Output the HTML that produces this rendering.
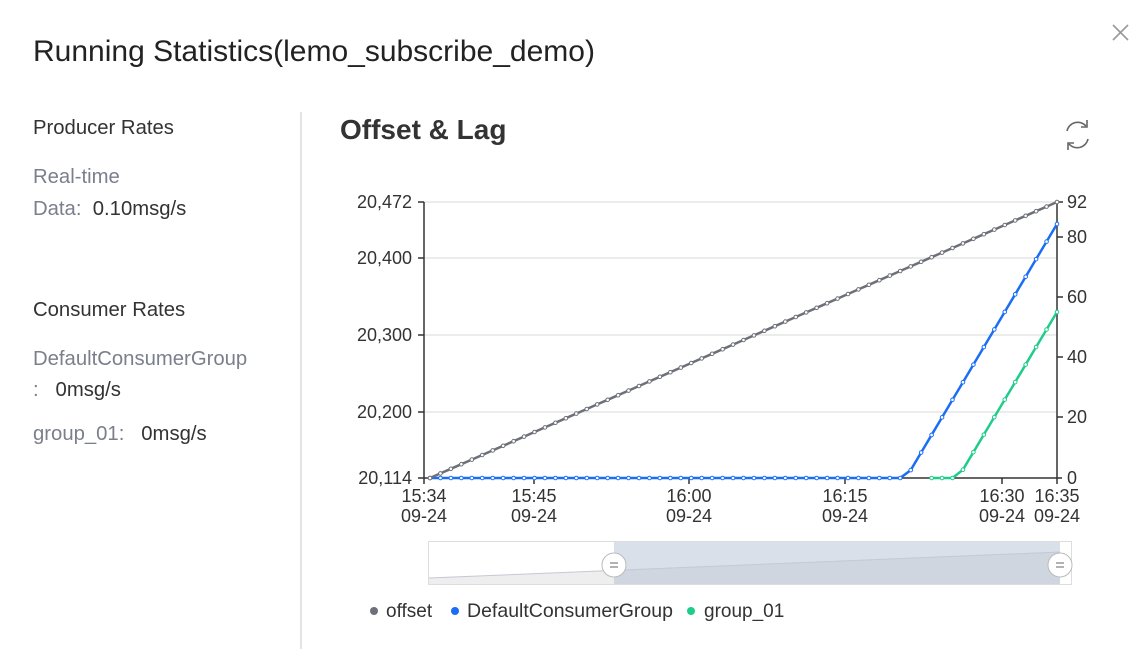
<!DOCTYPE html>
<html><head><meta charset="utf-8"><style>
body{margin:0;width:1141px;height:649px;background:#fff;font-family:"Liberation Sans",sans-serif;overflow:hidden;position:relative;color:#333}
.a{position:absolute;white-space:nowrap}
.g{color:#7b7f8c}
.t{font-size:20.3px}
</style></head><body>
<div class="a" style="left:33px;top:35px;font-size:30px;color:#222">Running Statistics(lemo_subscribe_demo)</div>
<div class="a t" style="left:33px;top:117px">Producer Rates</div>
<div class="a g t" style="left:33px;top:166px">Real-time</div>
<div class="a t" style="left:33px;top:198px"><span class="g">Data:</span>&nbsp; 0.10msg/s</div>
<div class="a t" style="left:33px;top:299px">Consumer Rates</div>
<div class="a g t" style="left:33px;top:348px">DefaultConsumerGroup</div>
<div class="a t" style="left:33px;top:379px"><span class="g">:</span>&nbsp;&nbsp; 0msg/s</div>
<div class="a t" style="left:33px;top:423px"><span class="g">group_01:</span>&nbsp;&nbsp; 0msg/s</div>
<div class="a" style="left:300px;top:112px;width:2px;height:537px;background:#e3e3e3"></div>
<div class="a" style="left:340px;top:114px;font-size:28px;font-weight:bold;color:#333">Offset &amp; Lag</div>
<svg class="a" style="left:0;top:0" width="1141" height="649" id="s">
<g stroke="#999" stroke-width="1.6"><line x1="1113" y1="25" x2="1128" y2="40"/><line x1="1128" y1="25" x2="1113" y2="40"/></g>
<g fill="none" stroke="#666" stroke-width="1.6"><path d="M1067 131a11 11 0 0 1 19-5M1088 139a11 11 0 0 1-19 5"/><path d="M1087 120v7h-6M1068 150v-7h6"/></g>
<g stroke="#e6e6e6" stroke-width="1.5"><line x1="424" x2="1057" y1="202" y2="202"/><line x1="424" x2="1057" y1="258" y2="258"/><line x1="424" x2="1057" y1="335" y2="335"/><line x1="424" x2="1057" y1="412" y2="412"/></g>
<g stroke="#333" stroke-width="1.5"><line x1="424" x2="424" y1="202" y2="478"/><line x1="1057" x2="1057" y1="202" y2="478"/><line x1="418" x2="1062" y1="478" y2="478"/>
<line x1="418" x2="424" y1="202" y2="202"/><line x1="418" x2="424" y1="258" y2="258"/><line x1="418" x2="424" y1="335" y2="335"/><line x1="418" x2="424" y1="412" y2="412"/>
<line x1="1057" x2="1063" y1="202" y2="202"/><line x1="1057" x2="1063" y1="237" y2="237"/><line x1="1057" x2="1063" y1="297" y2="297"/><line x1="1057" x2="1063" y1="357" y2="357"/><line x1="1057" x2="1063" y1="417" y2="417"/>
<line x1="424" x2="424" y1="478" y2="484"/><line x1="534" x2="534" y1="478" y2="484"/><line x1="689" x2="689" y1="478" y2="484"/><line x1="845" x2="845" y1="478" y2="484"/><line x1="1002" x2="1002" y1="478" y2="484"/><line x1="1057" x2="1057" y1="478" y2="484"/></g>
<g font-size="18" fill="#333" text-anchor="end"><text x="412" y="208">20,472</text><text x="412" y="264">20,400</text><text x="412" y="341">20,300</text><text x="412" y="418">20,200</text><text x="412" y="484">20,114</text></g>
<g font-size="18" fill="#333"><text x="1067" y="208">92</text><text x="1067" y="243">80</text><text x="1067" y="303">60</text><text x="1067" y="363">40</text><text x="1067" y="423">20</text><text x="1067" y="484">0</text></g>
<g font-size="18" fill="#333" text-anchor="middle"><text x="424" y="502">15:34</text><text x="424" y="522">09-24</text><text x="534" y="502">15:45</text><text x="534" y="522">09-24</text><text x="689" y="502">16:00</text><text x="689" y="522">09-24</text><text x="845" y="502">16:15</text><text x="845" y="522">09-24</text><text x="1002" y="502">16:30</text><text x="1002" y="522">09-24</text><text x="1057" y="502">16:35</text><text x="1057" y="522">09-24</text></g>
<g id="lines"></g>
<rect x="428.5" y="541.5" width="643" height="43" fill="#fff" stroke="#ddd"/>
<path d="M429 578L614 570V584H429Z" fill="#eee"/>
<rect x="614" y="542" width="446" height="42" fill="#d9e0ea"/>
<path d="M614 570L1060 552V584H614Z" fill="#cfd6e0"/>
<path d="M429 578L1060 552" stroke="#c4c9d2" fill="none"/>
<g fill="#fff" stroke="#bbb"><circle cx="614" cy="565" r="12"/><circle cx="1060" cy="565" r="12"/></g>
<g stroke="#999" stroke-width="1.5"><line x1="610" x2="618" y1="563" y2="563"/><line x1="610" x2="618" y1="567" y2="567"/><line x1="1056" x2="1064" y1="563" y2="563"/><line x1="1056" x2="1064" y1="567" y2="567"/></g>
<circle cx="374" cy="611" r="4" fill="#6e7079"/><text x="386" y="617" font-size="19" fill="#333">offset</text>
<circle cx="455" cy="611" r="4" fill="#1a6ef5"/><text x="467" y="617" font-size="19.5" fill="#333">DefaultConsumerGroup</text>
<circle cx="691" cy="611" r="4" fill="#1fcc8a"/><text x="704" y="617" font-size="19" fill="#333">group_01</text>
</svg>
<script>
var g=document.getElementById('lines'),ns='http://www.w3.org/2000/svg';
function line(pts,c){var p=document.createElementNS(ns,'polyline');p.setAttribute('points',pts.map(function(q){return q.join(',')}).join(' '));p.setAttribute('fill','none');p.setAttribute('stroke',c);p.setAttribute('stroke-width','2.5');g.appendChild(p);
pts.forEach(function(q){var c2=document.createElementNS(ns,'circle');c2.setAttribute('cx',q[0]);c2.setAttribute('cy',q[1]);c2.setAttribute('r','1.8');c2.setAttribute('fill','#fff');c2.setAttribute('stroke',c);c2.setAttribute('stroke-width','1');g.appendChild(c2);});}
var o=[],b=[],gr=[];
for(var i=0;i<=60;i++){var x=430+i*627/60;o.push([x,478-(x-430)/627*276]);
 b.push([x,x<906?478:478-(x-906)/151*254]);
 if(x>=929)gr.push([x,x<958?478:478-(x-958)/99*166]);}
line(b,'#1a6ef5');line(gr,'#1fcc8a');line(o,'#6e7079');
</script>
</body></html>
